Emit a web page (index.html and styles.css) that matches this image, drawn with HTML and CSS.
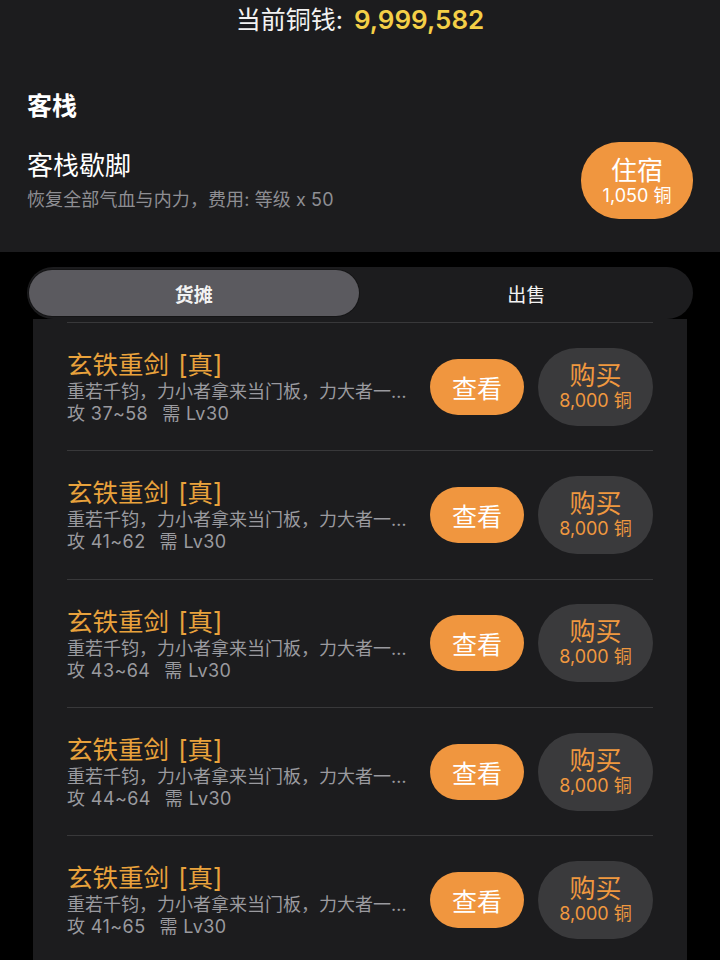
FILE: index.html
```html
<!DOCTYPE html>
<html lang="zh">
<head>
<meta charset="utf-8">
<title>客栈</title>
<link rel="stylesheet" href="styles.css">
</head>
<body>
<div class="app">
  <section class="top">
    <div class="balance">当前铜钱: <span class="coins">9,999,582</span></div>
    <h2 class="section-title">客栈</h2>
    <div class="inn-row">
      <div class="inn-text">
        <div class="inn-name">客栈歇脚</div>
        <div class="inn-desc">恢复全部气血与内力，费用: 等级 x 50</div>
      </div>
      <button class="stay-btn"><span class="btn-main">住宿</span><span class="btn-sub">1,050 铜</span></button>
    </div>
  </section>

  <div class="tabs">
    <div class="tab active">货摊</div>
    <div class="tab">出售</div>
  </div>

  <div class="list">
    <div class="row">
      <div class="item-text">
        <div class="item-name">玄铁重剑 [真]</div>
        <div class="item-desc">重若千钧，力小者拿来当门板，力大者一…</div>
        <div class="item-stats"><span>攻 37~58</span><span>需 Lv30</span></div>
      </div>
      <button class="view-btn">查看</button>
      <button class="buy-btn"><span class="btn-main">购买</span><span class="btn-sub">8,000 铜</span></button>
    </div>
    <div class="row">
      <div class="item-text">
        <div class="item-name">玄铁重剑 [真]</div>
        <div class="item-desc">重若千钧，力小者拿来当门板，力大者一…</div>
        <div class="item-stats"><span>攻 41~62</span><span>需 Lv30</span></div>
      </div>
      <button class="view-btn">查看</button>
      <button class="buy-btn"><span class="btn-main">购买</span><span class="btn-sub">8,000 铜</span></button>
    </div>
    <div class="row">
      <div class="item-text">
        <div class="item-name">玄铁重剑 [真]</div>
        <div class="item-desc">重若千钧，力小者拿来当门板，力大者一…</div>
        <div class="item-stats"><span>攻 43~64</span><span>需 Lv30</span></div>
      </div>
      <button class="view-btn">查看</button>
      <button class="buy-btn"><span class="btn-main">购买</span><span class="btn-sub">8,000 铜</span></button>
    </div>
    <div class="row">
      <div class="item-text">
        <div class="item-name">玄铁重剑 [真]</div>
        <div class="item-desc">重若千钧，力小者拿来当门板，力大者一…</div>
        <div class="item-stats"><span>攻 44~64</span><span>需 Lv30</span></div>
      </div>
      <button class="view-btn">查看</button>
      <button class="buy-btn"><span class="btn-main">购买</span><span class="btn-sub">8,000 铜</span></button>
    </div>
    <div class="row">
      <div class="item-text">
        <div class="item-name">玄铁重剑 [真]</div>
        <div class="item-desc">重若千钧，力小者拿来当门板，力大者一…</div>
        <div class="item-stats"><span>攻 41~65</span><span>需 Lv30</span></div>
      </div>
      <button class="view-btn">查看</button>
      <button class="buy-btn"><span class="btn-main">购买</span><span class="btn-sub">8,000 铜</span></button>
    </div>
  </div>
</div>
</body>
</html>
```

FILE: styles.css
```css
* { box-sizing: border-box; }
html, body {
  margin: 0;
  padding: 0;
  background: #000;
  overflow: hidden;
}
body {
  font-family: Inter, "Noto Sans CJK SC", sans-serif;
  color: #fff;
}
.app {
  height: 100vh;
  display: flex;
  flex-direction: column;
  overflow: hidden;
}
.top {
  background: #1c1c1e;
  height: 252px;
  flex-shrink: 0;
  padding: 0 27px;
}
.balance {
  text-align: center;
  font-size: 25px;
  line-height: 40px;
  color: #f2f2f2;
}
.coins {
  color: #f4cf47;
  font-weight: 600;
  font-size: 26px;
  margin-left: 4px;
}
.section-title {
  margin: 51px 0 0;
  font-size: 25px;
  line-height: 30px;
  font-weight: 600;
}
.inn-row {
  display: flex;
  align-items: center;
  margin-top: 21px;
}
.inn-text { flex: 1; }
.inn-name {
  font-size: 26px;
  line-height: 30px;
}
.inn-desc {
  margin-top: 8px;
  font-size: 18px;
  line-height: 22px;
  color: #8e8e93;
  letter-spacing: 0.1px;
}
button {
  font-family: inherit;
  border: none;
  padding: 0;
  display: flex;
  flex-direction: column;
  align-items: center;
  justify-content: center;
  flex-shrink: 0;
}
.btn-main {
  font-size: 26px;
  line-height: 28px;
}
.btn-sub {
  font-size: 18px;
  line-height: 22px;
}
.stay-btn {
  width: 112px;
  height: 77px;
  border-radius: 38px;
  background: #f0963f;
  color: #fff;
  padding-top: 3px;
}
.tabs {
  margin: 15px 27px 0;
  height: 52px;
  border-radius: 26px;
  background: #1c1c1e;
  padding: 3px 2px;
  display: grid;
  grid-template-columns: 1fr 1fr;
  gap: 3px;
  flex-shrink: 0;
}
.tab {
  display: flex;
  align-items: center;
  justify-content: center;
  font-size: 19px;
  border-radius: 23px;
  color: #f2f2f2;
}
.tab.active {
  background: #5b5a5f;
  font-weight: 700;
  box-shadow: 0 0 0 1px rgba(0,0,0,0.25);
}
.list {
  flex: 1;
  margin: 0 33px;
  background: #1c1c1e;
  padding-top: 3px;
}
.row {
  margin: 0 34px;
  height: 128.3px;
  border-top: 1px solid #38383a;
  display: flex;
  align-items: center;
}
.item-text {
  flex: 1;
  min-width: 0;
  margin-right: 16px;
  padding-top: 3px;
}
.item-name {
  font-size: 25.5px;
  line-height: 28px;
  color: #e9a23c;
  word-spacing: 2px;
}
.item-desc, .item-stats {
  font-size: 18px;
  line-height: 22px;
  color: #9a9a9f;
  white-space: nowrap;
}
.item-desc { margin-top: 2px; }
.item-stats {
  display: flex;
  gap: 14px;
  letter-spacing: 0.4px;
}
.view-btn {
  width: 94px;
  height: 56px;
  border-radius: 28px;
  background: #f0963f;
  color: #fff;
  font-size: 25px;
}
.buy-btn {
  margin-left: 14px;
  width: 115px;
  height: 78px;
  border-radius: 39px;
  background: #3a3a3c;
  color: #f0983f;
}
```
